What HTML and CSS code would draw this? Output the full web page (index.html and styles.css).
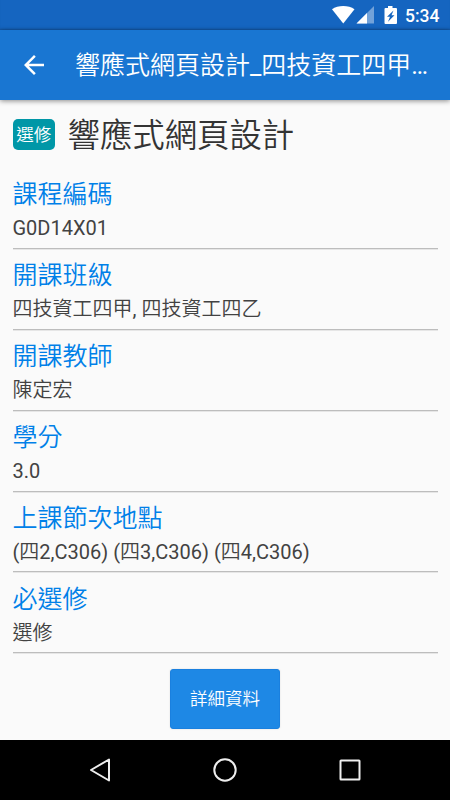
FILE: index.html
```html
<!DOCTYPE html>
<html lang="zh-Hant">
<head>
<meta charset="utf-8">
<title>響應式網頁設計</title>
<link rel="stylesheet" href="styles.css">
</head>
<body>
<div class="screen">
  <div class="status">
    <svg class="status-icons" width="70" height="30" viewBox="0 0 70 30">
      <path fill="#fff" d="M0 9.3C6 4.9 16.500 4.900 22.500 9.300L11.250 23.500Z"/>
      <path fill="#fff" fill-opacity=".4" d="M42 6V23.500H24.500Z"/>
      <path fill="#fff" d="M35 13V23.500H24.500Z"/>
      <path fill="#fff" fill-rule="evenodd" d="M56 6H60.500V8H64Q65 8 65 9V23Q65 24 64 24H53.500Q52.500 24 52.500 23V9Q52.500 8 53.500 8H56ZM61.500 10.500L55 16.800H58L56 21.800L62.500 15.300H59.500Z"/>
    </svg>
    <span class="clock">5:34</span>
  </div>
  <header class="appbar">
    <svg class="back" width="30" height="30" viewBox="0 0 24 24"><path fill="#fff" d="M20 11H7.830l5.590-5.590L12 4l-8 8 8 8 1.410-1.410L7.830 13H20v-2z"/></svg>
    <h1 class="title">響應式網頁設計<span class="latin">_</span>四技資工四甲<span class="latin">…</span></h1>
  </header>
  <main class="content">
    <div class="heading"><span class="badge">選修</span><h2 class="course">響應式網頁設計</h2></div>
    <section class="item"><div class="label">課程編碼</div><div class="value latin">G0D14X01</div></section>
    <section class="item"><div class="label">開課班級</div><div class="value">四技資工四甲<span class="latin">, </span>四技資工四乙</div></section>
    <section class="item"><div class="label">開課教師</div><div class="value">陳定宏</div></section>
    <section class="item"><div class="label">學分</div><div class="value latin">3.0</div></section>
    <section class="item"><div class="label">上課節次地點</div><div class="value"><span class="latin">(</span>四<span class="latin">2,C306) (</span>四<span class="latin">3,C306) (</span>四<span class="latin">4,C306)</span></div></section>
    <section class="item"><div class="label">必選修</div><div class="value">選修</div></section>
    <button class="detail">詳細資料</button>
  </main>
  <nav class="navbar">
    <svg width="30" height="30" viewBox="0 0 30 30"><path d="M24 4.500V25.500L6 15Z"/></svg>
    <svg width="30" height="30" viewBox="0 0 30 30"><circle cx="15" cy="15" r="10.700"/></svg>
    <svg width="30" height="30" viewBox="0 0 30 30"><rect x="5.500" y="5.500" width="19" height="19" rx=".5"/></svg>
  </nav>
</div>
</body>
</html>
```

FILE: styles.css
```css
* { box-sizing: border-box; }
body {
  margin: 0;
  font-family: Roboto, "Noto Sans CJK TC", sans-serif;
  color: #424242;
  background: #fafafa;
}
.screen {
  width: 450px;
  height: 800px;
  display: flex;
  flex-direction: column;
  overflow: hidden;
}
.status {
  height: 30px;
  flex: none;
  background: #1565c0;
  display: flex;
  justify-content: flex-end;
  align-items: center;
  padding-right: 10px;
  box-shadow: inset 0 -2px 2px -1px rgba(0, 0, 0, .15);
}
.clock {
  width: 35px;
  margin-left: 3px;
  font-size: 17.5px;
  font-weight: 500;
  line-height: 30px;
  color: #fff;
  white-space: nowrap;
  padding-top: 2px;
}
.appbar {
  height: 70px;
  flex: none;
  background: #1976d2;
  display: flex;
  align-items: center;
  padding-left: 19px;
  box-shadow: 0 1px 5px rgba(0, 0, 0, .45);
}
.title {
  margin: 2px 0 0 26px;
  font-size: 25px;
  line-height: 36px;
  font-weight: 350;
  color: #fff;
  white-space: nowrap;
}
.content {
  flex: 1;
  padding: 0 12.5px;
  display: flex;
  flex-direction: column;
}
.heading {
  height: 68px;
  flex: none;
  display: flex;
  align-items: center;
  gap: 12.5px;
}
.badge {
  width: 42.5px;
  height: 31px;
  border-radius: 5px;
  background: #0097a7;
  color: #fff;
  font-size: 17.5px;
  font-weight: 350;
  line-height: 32px;
  text-align: center;
}
.course {
  margin: 4px 0 0;
  font-size: 32.4px;
  font-weight: 350;
  line-height: 48px;
  color: #333;
}
.item {
  height: 80.9px;
  flex: none;
  padding-top: 9.2px;
  border-bottom: 1px solid #bdbdbd;
  box-shadow: 0 1px 0 #e6e6e6;
}
.label {
  font-size: 25px;
  font-weight: 350;
  line-height: 36px;
  color: #0080e8;
}
.value {
  font-size: 20px;
  line-height: 30px;
  font-weight: 350;
}
.latin {
  font-weight: 400;
}
.detail {
  align-self: center;
  width: 110px;
  height: 60px;
  flex: none;
  margin-top: 15.600px;
  padding: 0;
  border: 1px solid #1a80df;
  border-radius: 3px;
  background: #1e88e5;
  color: #fff;
  font: 350 17.5px/26px Roboto, "Noto Sans CJK TC", sans-serif;
  box-shadow: 0 0 2px rgba(0, 0, 0, .12);
}
.navbar {
  height: 60px;
  flex: none;
  background: #000;
  display: flex;
  justify-content: center;
  align-items: center;
  gap: 95px;
}
.navbar svg {
  fill: none;
  stroke: #eee;
  stroke-width: 2;
  stroke-linejoin: round;
}
```
